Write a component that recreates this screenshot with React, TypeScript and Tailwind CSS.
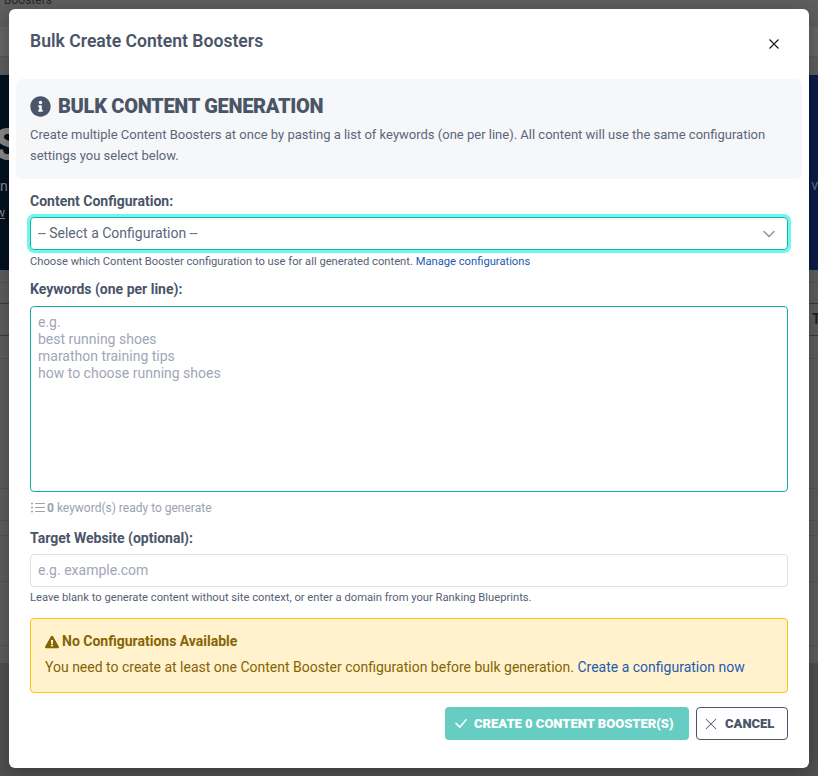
import { ChevronDown } from 'lucide-react';
import { BsCheckLg, BsListUl, BsXLg } from 'react-icons/bs';
import { FaExclamationTriangle, FaInfoCircle } from 'react-icons/fa';

const display = "font-['Roboto',sans-serif] font-black uppercase";

function PageBehind() {
  return (
    <div className="h-[776px] overflow-hidden bg-[#4f5150] font-['Roboto',sans-serif]">
      <div className="flex h-[75px] flex-col overflow-hidden bg-[#5e5f60] text-xs leading-none text-[#262729]">
        <div className="-mt-[6px] pl-1">Boosters</div>
        <div className="mt-[21px] h-[30px] border-b border-[#585959] bg-[#666767]" />
      </div>
      <div className="flex h-[195px] justify-between bg-gradient-to-r from-[#02101f] to-[#0a1c48]">
        <div className="flex flex-col pt-[48px] text-[#8a8a8a]">
          <span className="-ml-[6px] text-[44px] font-black leading-[44px]">S</span>
          <span className="-ml-2 mt-[9px] text-sm">on</span>
          <span className="-ml-1 mt-[9px] text-xs underline">w</span>
        </div>
        <div className="pt-[100px] text-sm text-[#6c7383]">r v</div>
      </div>
      <div className="h-[393px] bg-[#5d5f5f]">
        <div className="h-[13px] border-b border-[#525454]" />
        <div className="mt-[20px] flex h-[33px] justify-end border-y border-[#3b3c3c]">
          <span className="w-[6px] text-sm font-bold leading-[30px] text-[#1c2230]">T</span>
        </div>
        <div className="h-[23px] border-b border-[#525454]" />
        <div className="h-[130px] border-b border-[#525454]" />
        <div className="h-[32px] border-b border-[#525454]" />
        <div className="h-[15px] border-b border-[#525454]" />
        <div className="h-[46px] border-b border-[#525454]" />
        <div className="h-[64px] border-b border-[#525454]" />
      </div>
    </div>
  );
}

function FieldLabel({ children }: { children: React.ReactNode }) {
  return <label className="block text-sm font-bold leading-[21px] text-[#4a5568]">{children}</label>;
}

export default function App() {
  return (
    <div className="relative h-[776px] overflow-hidden">
      <PageBehind />

      <div className="absolute left-[9px] top-[9px] h-[759px] w-[800px] rounded-md bg-white font-['Roboto',sans-serif] text-[#4a5568] shadow-[0_4px_20px_rgba(0,0,0,0.3)]">
        <div className="flex h-[70px] items-start justify-between pl-[21px] pr-[29px]">
          <h5 className="pt-[20px] text-[17.6px] font-semibold leading-[24px]">Bulk Create Content Boosters</h5>
          <button className="mt-[29px] text-black">
            <BsXLg size={12} className="stroke-[0.6px]" />
          </button>
        </div>

        <div className="mx-[7px] h-[100px] rounded-md bg-[#f6f7f9] px-[14px] pt-[16px]">
          <div className="flex h-[22px] items-center gap-[7px]">
            <FaInfoCircle size={21} />
            <h3 className={`${display} text-xl leading-none tracking-[-0.3px]`}>Bulk Content Generation</h3>
          </div>
          <p className="mt-[7px] text-[13px] leading-[21px] text-[#5c6679]">
            Create multiple Content Boosters at once by pasting a list of keywords (one per line). All content will use the same configuration settings you select below.
          </p>
        </div>

        <div className="px-[21px]">
          <div className="mt-[12px]">
            <FieldLabel>Content Configuration:</FieldLabel>
            <div className="mt-[5px] flex h-[33px] items-center justify-between rounded border border-[#12b5a5] pb-[2px] pl-[7px] pr-[8px] text-sm text-[#5c6679] shadow-[0_0_0_3px_#6ff7ee]">
              <span>-- Select a Configuration --</span>
              <ChevronDown size={20} strokeWidth={1.75} className="mt-[2px] text-[#8b93a3]" />
            </div>
            <p className="mt-[3px] text-[11.2px] leading-[17px] text-[#566174]">
              Choose which Content Booster configuration to use for all generated content.{' '}
              <a className="text-[#1e5bb0]">Manage configurations</a>
            </p>
          </div>

          <div className="pt-[9px]">
            <FieldLabel>Keywords (one per line):</FieldLabel>
            <div className="mt-[6px] h-[186px] whitespace-pre-line rounded border border-[#12b09f] px-[7px] pt-[7px] text-sm leading-[17px] text-[#a0a6b8]">
              {'e.g.\nbest running shoes\nmarathon training tips\nhow to choose running shoes'}
            </div>
            <p className="mt-[7px] flex h-[17px] items-center text-xs text-[#9aa1b0]">
              <BsListUl size={16} className="mr-[1px]" />
              <b className="mr-[3px]">0</b> keyword(s) ready to generate
            </p>
          </div>

          <div className="mt-[12px]">
            <FieldLabel>Target Website (optional):</FieldLabel>
            <div className="mt-[5px] flex h-[33px] items-center rounded border border-[#dcdfe8] px-[7px] pb-[2px] text-sm text-[#a0a6b8]">
              e.g. example.com
            </div>
            <p className="mt-[2px] text-[11.2px] leading-[17px] text-[#566174]">
              Leave blank to generate content without site context, or enter a domain from your Ranking Blueprints.
            </p>
          </div>

          <div className="mt-[12px] h-[75px] rounded border border-[#ffc412] bg-[#fff2cd] px-[14px] pt-[12px] text-[#856404]">
            <div className="flex items-center gap-[3px] text-sm font-bold leading-[21px]">
              <FaExclamationTriangle size={14} />
              No Configurations Available
            </div>
            <p className="mt-[5px] text-sm leading-[21px]">
              You need to create at least one Content Booster configuration before bulk generation.{' '}
              <a className="text-[#1e5bb0]">Create a configuration now</a>
            </p>
          </div>

          <div className="mt-[14px] flex justify-end gap-[7px]">
            <button className={`${display} flex h-[33px] w-[244px] items-center gap-[5px] rounded bg-[#66cdc2] pl-[7px] text-[13px] leading-none text-white`}>
              <BsCheckLg size={17} />
              Create 0 Content Booster(s)
            </button>
            <button className={`${display} flex h-[33px] w-[92px] items-center gap-[7px] rounded border border-[#4a5568] pl-[7px] text-[13px] leading-none`}>
              <BsXLg size={14} />
              Cancel
            </button>
          </div>
        </div>
      </div>
    </div>
  );
}
